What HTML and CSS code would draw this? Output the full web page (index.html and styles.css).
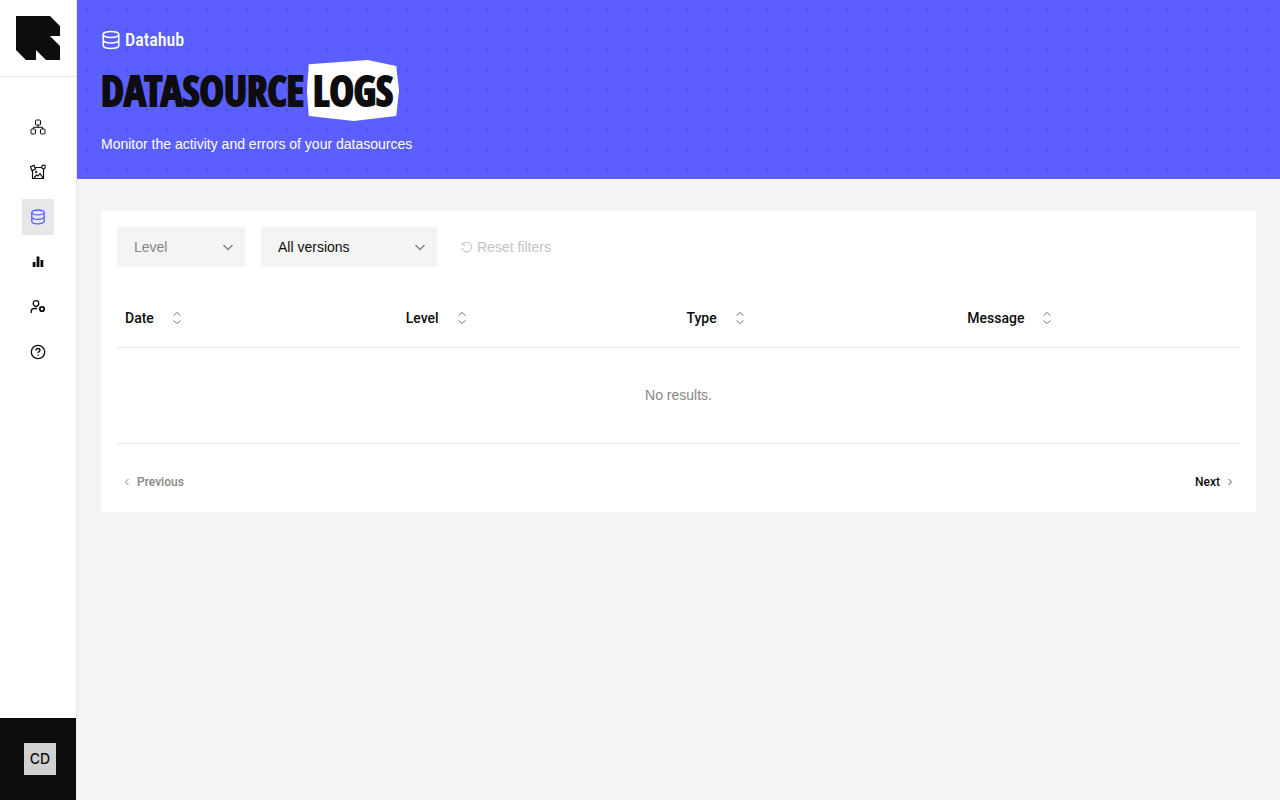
FILE: index.html
```html
<!DOCTYPE html>
<html lang="en">
<head>
  <meta charset="UTF-8" />
  <meta name="viewport" content="width=device-width, initial-scale=1.0" />
  <title>Datasource logs</title>
  <link rel="stylesheet" href="styles.css">
</head>
<body>

<aside class="sidebar">
  <a class="logo" href="#" aria-label="Home">
    <svg width="44" height="44" viewBox="0 0 44 44"><path fill="#0d0d0d" d="M0 0H34L44 10V20H34L44 30V44H30L20 34V44H10L0 34Z"/></svg>
  </a>
  <nav class="nav">
    <a class="nav-item" href="#" aria-label="Projects">
      <svg width="16" height="16" viewBox="0 0 16 16" fill="none" stroke="#0d0d0d"><rect x="5.5" y="1" width="5" height="5" rx="1"/><rect x="1" y="10" width="4.500" height="5" rx="1"/><rect x="10.500" y="10" width="4.500" height="5" rx="1"/><path d="M8 6v2.300M3.300 10V8.300h9.400V10"/></svg>
    </a>
    <a class="nav-item" href="#" aria-label="Canvas">
      <svg width="16" height="16" viewBox="0 0 16 16" fill="none" stroke="#0d0d0d" stroke-width="1.200"><rect x="1" y="2" width="4" height="4" transform="rotate(-25 3 4)"/><circle cx="13.500" cy="3" r="1.800"/><path d="M5.300 3.500h6.300M2.500 6.300v8.200h11V5M4 14l2.500-3 1.500 1 2-2.500 3 4.500M5.500 7l1.500 1.500M5.800 9V7.500h1.500"/></svg>
    </a>
    <a class="nav-item active" href="#" aria-label="Datahub">
      <svg width="16" height="16" viewBox="0 0 16 16" fill="none" stroke="#5b5fff" stroke-width="1.300"><ellipse cx="8" cy="3.400" rx="6.200" ry="2.400"/><path d="M1.800 3.400v9c0 1.400 2.800 2.400 6.200 2.400s6.200-1 6.200-2.400v-9M1.800 8c0 1.400 2.800 2.400 6.200 2.400s6.200-1 6.200-2.400"/></svg>
    </a>
    <a class="nav-item" href="#" aria-label="Statistics">
      <svg width="16" height="16" viewBox="0 0 16 16" fill="#0d0d0d"><path d="M2.700 8h2.800v5H2.700zM6.600 2.500h2.800V13H6.600zM10.500 6h2.800v7h-2.800z"/></svg>
    </a>
    <a class="nav-item" href="#" aria-label="Users">
      <svg width="16" height="16" viewBox="0 0 16 16" fill="none" stroke="#0d0d0d" stroke-width="1.300"><circle cx="6" cy="4.500" r="2.800"/><path d="M1.200 14v-1.500c0-2 1.300-3 3-3h3"/><circle cx="12" cy="10" r="2.200" stroke-width="1.800"/></svg>
    </a>
    <a class="nav-item" href="#" aria-label="Help">
      <svg width="16" height="16" viewBox="0 0 16 16" fill="none" stroke="#0d0d0d" stroke-width="1.300"><circle cx="8" cy="8" r="6.700"/><path d="M6 6.400c0-1.200.9-1.900 2-1.900s2 .7 2 1.800c0 1.300-2 1.400-2 2.700"/><path d="M8 10.600v1.100"/></svg>
    </a>
  </nav>
  <div class="sidebar-footer">
    <button class="avatar" type="button">CD</button>
  </div>
</aside>

<main class="main">
  <header class="banner">
    <div class="section">
      <svg width="20" height="20" viewBox="0 0 20 20" fill="none" stroke="#fff" stroke-width="1.500"><ellipse cx="10" cy="4.500" rx="7.800" ry="3"/><path d="M2.200 4.500v11c0 1.700 3.500 3 7.800 3s7.800-1.300 7.800-3v-11M2.200 10c0 1.700 3.500 3 7.800 3s7.800-1.300 7.800-3"/></svg>
      <span>Datahub</span>
    </div>
    <h1 class="title">
      <span>DATASOURCE</span>
      <span class="tag">LOGS</span>
    </h1>
    <p class="subtitle">Monitor the activity and errors of your datasources</p>
  </header>

  <section class="card">
    <div class="filters">
      <div class="select level">
        <select aria-label="Level">
          <option>Level</option>
        </select>
        <svg width="12" height="12" viewBox="0 0 12 12"><path d="M1.500 4l4.500 4.500L10.500 4"/></svg>
      </div>
      <div class="select version">
        <select aria-label="Version">
          <option>All versions</option>
        </select>
        <svg width="12" height="12" viewBox="0 0 12 12"><path d="M1.500 4l4.500 4.500L10.500 4"/></svg>
      </div>
      <button class="reset" type="button" disabled>
        <svg width="12" height="12" viewBox="0 0 12 12"><path d="M1.500 1v3h3M1.600 4A4.800 4.800 0 1 1 1.200 7"/></svg>
        Reset filters
      </button>
    </div>

    <table class="logs">
      <thead>
        <tr>
          <th><button class="sort" type="button">Date <svg width="10" height="14" viewBox="0 0 10 14"><path d="M1.500 4.500L5 1.500l3.500 3M1.500 9.500l3.500 3 3.500-3"/></svg></button></th>
          <th><button class="sort" type="button">Level <svg width="10" height="14" viewBox="0 0 10 14"><path d="M1.500 4.500L5 1.500l3.500 3M1.500 9.500l3.500 3 3.500-3"/></svg></button></th>
          <th><button class="sort" type="button">Type <svg width="10" height="14" viewBox="0 0 10 14"><path d="M1.500 4.500L5 1.500l3.500 3M1.500 9.500l3.500 3 3.500-3"/></svg></button></th>
          <th><button class="sort" type="button">Message <svg width="10" height="14" viewBox="0 0 10 14"><path d="M1.500 4.500L5 1.500l3.500 3M1.500 9.500l3.500 3 3.500-3"/></svg></button></th>
        </tr>
      </thead>
      <tbody>
        <tr>
          <td colspan="4">No results.</td>
        </tr>
      </tbody>
    </table>

    <div class="pager">
      <button class="page-button" type="button" disabled>
        <svg width="8" height="8" viewBox="0 0 8 8"><path d="M5.500 1l-3 3 3 3"/></svg>
        Previous
      </button>
      <button class="page-button" type="button">
        Next
        <svg width="8" height="8" viewBox="0 0 8 8"><path d="M2.500 1l3 3-3 3"/></svg>
      </button>
    </div>
  </section>
</main>

</body>
</html>
```
FILE: styles.css
```css
* { margin: 0; padding: 0; box-sizing: border-box; }

body {
  display: flex;
  min-height: 100vh;
  font-family: "Liberation Sans", Arial, sans-serif;
  font-size: 14px;
  line-height: 20px;
  background: #f4f4f4;
  color: #0d0d0d;
}

button, select {
  font: inherit;
  color: inherit;
  border: none;
  background: none;
  cursor: pointer;
}

svg { display: block; flex-shrink: 0; }

.sidebar {
  position: sticky;
  top: 0;
  display: flex;
  flex-direction: column;
  flex-shrink: 0;
  width: 77px;
  height: 100vh;
  background: #fff;
  border-right: 1px solid #e7e7e7;
}

.logo {
  padding: 16px;
  border-bottom: 1px solid #e7e7e7;
}

.nav {
  display: flex;
  flex-direction: column;
  align-items: center;
  flex-grow: 1;
  gap: 9px;
  padding-top: 32px;
}

.nav-item { padding: 10px 8px; }

.nav-item.active { background: #e7e7e7; }

.sidebar-footer {
  padding: 25px 24px;
  background: #0d0d0d;
}

.avatar {
  display: block;
  width: 32px;
  height: 32px;
  font-family: Inter, sans-serif;
  font-weight: 500;
  background: #d0d0d0;
}

.main {
  flex-grow: 1;
  min-width: 0;
}

.banner {
  padding: 28px 24px 24px;
  color: #fff;
  background: #5b5fff conic-gradient(from 0deg at 2px 2px, transparent 75%, #4d50dc 0) 9px 9px / 20px 20px;
}

.section {
  display: flex;
  align-items: center;
  gap: 4px;
  height: 24px;
  font-family: "Roboto Condensed", "Open Sans Condensed", "Liberation Sans", sans-serif;
  font-size: 18px;
  font-weight: 500;
}

.title {
  display: flex;
  align-items: center;
  gap: 3px;
  margin: 8px 0 13px;
  font-family: "Noto Sans ExtraCondensed Black", "Noto Sans ExtraCondensed", "Open Sans Condensed ExtraBold", "Open Sans Condensed", "Roboto Condensed", "Liberation Sans", sans-serif;
  font-size: 41px;
  font-weight: 900;
  line-height: 61px;
  color: #0d0d0d;
  -webkit-text-stroke: 2px #0d0d0d;
}

.tag {
  padding: 0 6px;
  background: #fff;
  clip-path: polygon(2% 7%, 66% 0, 97% 10%, 100% 50%, 97% 92%, 51% 100%, 2% 92%, 0 50%);
}

.subtitle { line-height: 21px; }

.card {
  margin: 32px 24px;
  padding: 16px;
  background: #fff;
}

.filters {
  display: flex;
  flex-wrap: wrap;
  gap: 16px;
}

.select { position: relative; }

.select select {
  appearance: none;
  width: 100%;
  height: 40px;
  padding: 0 32px 0 17px;
  border-radius: 1px;
  background: #f4f4f4;
}

.select svg {
  position: absolute;
  top: 14px;
  right: 11px;
  pointer-events: none;
  stroke: #868686;
  stroke-width: 1.5;
}

.level { width: 128px; color: #868686; }
.version { width: 176px; }

.select path, .reset path, .sort path, .page-button path {
  fill: none;
}

.reset {
  display: flex;
  align-items: center;
  gap: 4px;
  padding: 0 8px;
  color: #c3c3c3;
}

.reset svg { stroke: #c3c3c3; }

.logs {
  width: 100%;
  margin-top: 23px;
  table-layout: fixed;
  border-collapse: collapse;
}

.logs tr { border-bottom: 1px solid #e7e7e7; }

.logs th {
  height: 57px;
  padding: 0 8px;
  text-align: left;
}

.logs td {
  height: 96px;
  text-align: center;
  color: #868686;
}

.sort {
  display: flex;
  align-items: center;
  gap: 18px;
  font-family: Roboto, sans-serif;
  font-weight: 500;
}

.sort svg { stroke: #777; }

.pager {
  display: flex;
  justify-content: space-between;
  margin-top: 24px;
}

.page-button {
  display: flex;
  align-items: center;
  gap: 6px;
  height: 28px;
  padding: 0 6px;
  font-family: Roboto, sans-serif;
  font-size: 12px;
  font-weight: 500;
}

.page-button svg { stroke: #555; }
.page-button:disabled { color: #868686; }
.page-button:disabled svg { stroke: #868686; }
```
